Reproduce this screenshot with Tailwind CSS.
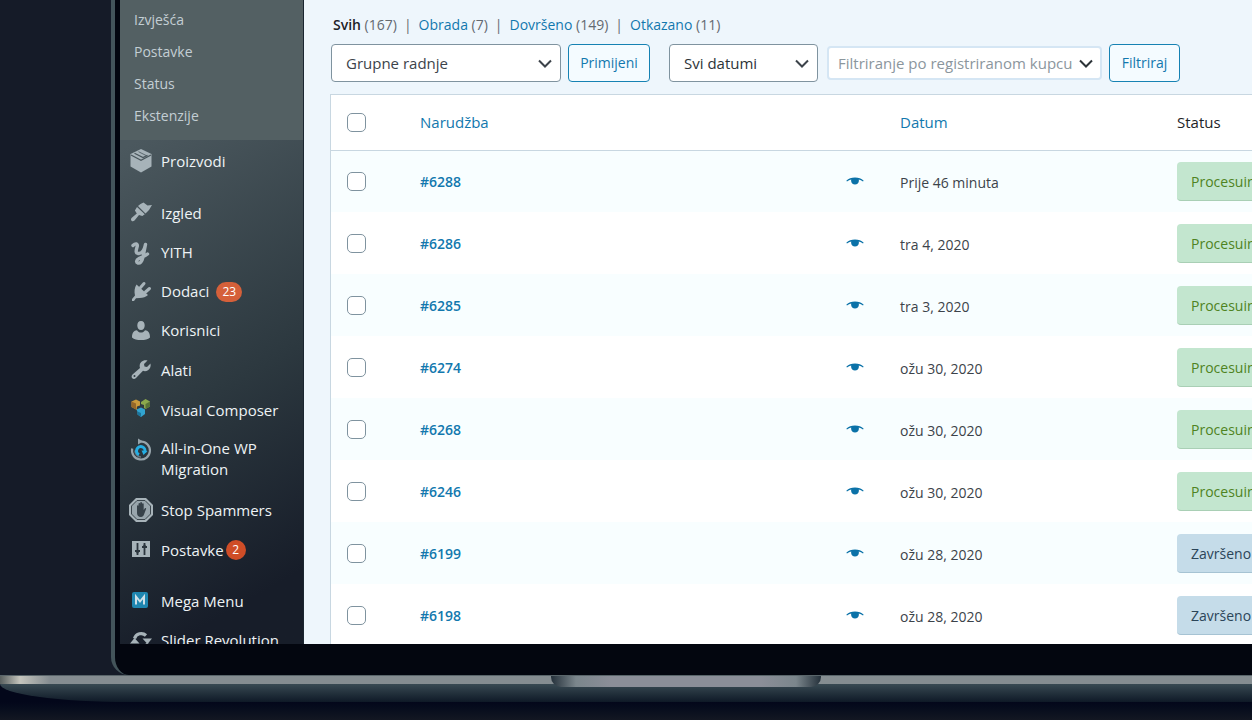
<!DOCTYPE html>
<html lang="hr">
<head>
    <meta charset="UTF-8">
    <meta name="viewport" content="width=device-width, initial-scale=1">
    <title>Narudžbe</title>
    <script src="https://cdn.jsdelivr.net/npm/@tailwindcss/browser@4"></script>
</head>
<body class="flex flex-col h-screen overflow-hidden bg-[#151b28] font-['Open_Sans','Noto_Sans',sans-serif] text-[15px] text-[#3c434a]">
    <svg class="hidden">
        <symbol id="eye" viewBox="0 0 18 10"><path fill="currentColor" d="M.3 4.800C2.500 2.600 5.500 1.500 9 1.500s6.500 1.100 8.700 3.300l-.7.700c-1.300-.9-2.700-1.600-4.300-2 .1.400.2.800.2 1.200C12.900 7 11.200 8.500 9 8.500S5.100 7 5.100 4.700c0-.4.100-.8.2-1.200-1.600.4-3 1.100-4.300 2z"/></symbol>
        <symbol id="chevron" viewBox="0 0 14 9"><path fill="none" stroke="currentColor" stroke-width="2" d="M1 1.500l6 6 6-6"/></symbol>
    </svg>

    <!-- Laptop lid -->
    <div class="flex flex-col flex-1 min-h-0 ml-[111px] pb-[31px] bg-[#03060f] border-l-4 border-[#43545a] rounded-bl-[18px]">
        <div class="flex flex-1 min-h-0 ml-[5px] overflow-hidden">
            <!-- Admin menu -->
            <nav class="w-[184px] shrink-0 overflow-hidden text-[#eef3f5] bg-linear-150 from-[#4b585e] from-20% via-[#2c383f] via-60% to-[#171d29] to-90% border-r border-[#1b2630]">
                <ul class="h-[140px] pt-1 pl-[14px] bg-[#536063] text-sm text-[#c3ced4]">
                    <li class="h-8 leading-8"><a href="#">Izvješća</a></li>
                    <li class="h-8 leading-8"><a href="#">Postavke</a></li>
                    <li class="h-8 leading-8"><a href="#">Status</a></li>
                    <li class="h-8 leading-8"><a href="#">Ekstenzije</a></li>
                </ul>
                <ul class="flex flex-col pt-px pl-2 text-[#a7b3b9]">
                    <li class="h-10 mb-3"><a href="#" class="flex items-center h-full gap-[7px]">
                        <svg class="w-[26px] h-[26px]" viewBox="0 0 26 26"><path fill="currentColor" d="M13 1l10.500 5v12.500L13 24.500 2.500 18.500V6z"/><path fill="none" stroke="#49565c" stroke-width="1.200" d="M3 7l10 5.300L23 7M6.500 5.300L15 9.500l4.500-2.300"/><path fill="none" stroke="#49565c" stroke-width=".8" d="M10.500 3.700l8 4"/></svg>
                        <span class="text-[#eef3f5]">Proizvodi</span></a></li>
                    <li class="h-10"><a href="#" class="flex items-center h-full gap-[7px]">
                        <svg class="w-[26px] h-[26px]" viewBox="0 0 26 26"><path fill="currentColor" d="M12.500 4l3-1.500 4 3L24 5l-3 5-3.500 3.500-7.500-7.500zM9 7l7.800 7.300-2.500 1.700-3.300-1-4.500 5.500c-1 1-2.300 1-3 .2s-.7-2 .3-2.900l5-4.300-1.900-3z"/></svg>
                        <span class="text-[#eef3f5]">Izgled</span></a></li>
                    <li class="h-[39px]"><a href="#" class="flex items-center h-full gap-[7px]">
                        <svg class="w-[26px] h-[26px]" viewBox="0 0 26 26"><path fill="none" stroke="currentColor" stroke-linecap="round" stroke-linejoin="round" stroke-width="3.400" d="M5 5.500c2.500-2.500 5-2 4.200 1C8.200 10 7 13.500 10.500 13.500c3.500 0 6-4.500 7-9L15 17c-1.200 5-3 6.500-5 6s-2-3 1-4.500 6-2.500 8.500-4.500"/></svg>
                        <span class="text-[#eef3f5]">YITH</span></a></li>
                    <li class="h-[39px]"><a href="#" class="flex items-center h-full gap-[7px]">
                        <svg class="w-[26px] h-[26px]" viewBox="0 0 26 26"><path fill="currentColor" d="M8.500 5.500l11.500 10.500c-2 1.800-5 3-8.500 3l-3.500.2L6 22H4v-2l3-3.500C6 12.500 6.500 8.500 8.500 5.500z"/><path stroke="currentColor" stroke-linecap="round" stroke-width="3" d="M12.500 8.500l3.500-4M17.500 13l4-3.500"/></svg>
                        <span class="text-[#eef3f5]">Dodaci</span>
                        <span class="px-[6px] rounded-full bg-[#d5603a] text-xs leading-5 text-white">23</span></a></li>
                    <li class="h-[39px]"><a href="#" class="flex items-center h-full gap-[7px]">
                        <svg class="w-[26px] h-[26px]" viewBox="0 0 26 26"><path fill="currentColor" d="M13 3c2.600 0 3.700 2 3.700 4.500S15.300 12 13 12 9.300 10 9.300 7.500 10.400 3 13 3zM9 12.200c1 1.500 2.300 2.300 4 2.300s3-.8 4-2.300c3.300.3 5 2.500 5 7.300-2 2-5 2.500-9 2.500s-7-.5-9-2.500c0-4.800 1.700-7 5-7.300z"/></svg>
                        <span class="text-[#eef3f5]">Korisnici</span></a></li>
                    <li class="h-10"><a href="#" class="flex items-center h-full gap-[7px]">
                        <svg class="w-[26px] h-[26px]" viewBox="0 0 26 26"><path fill="currentColor" fill-rule="evenodd" d="M19.500 3.500L16 7l.5 2.500 2.500.5L22.500 6.500c.6 3-.5 5.500-2.500 6.800-1.700 1-3.500 1-5 .5L8 21c-1.300 1.300-3 1-3.700.2-.9-.9-1-2.500.2-3.700l7.500-6.500c-.8-2-.3-4.300 1.200-5.900C15 3.400 17 3 19.500 3.500zM6.500 18a1 1 0 100 2 1 1 0 000-2z"/></svg>
                        <span class="text-[#eef3f5]">Alati</span></a></li>
                    <li class="h-10"><a href="#" class="flex items-center h-full gap-[7px]">
                        <svg class="w-[26px] h-[26px]" viewBox="0 0 26 26"><path fill="#c99a3c" d="M3.500 4.500L8 2.500l4 2v4l-3 1v3.500l-5.500-3z"/><path fill="#94672a" d="M3.500 4.500l4.500 2v3l1 3.500-5.500-3z"/><path fill="#8ba94c" d="M13 5l4.500-3L22 4.500v5L17.500 12l-1.500-1V8l-3-1z"/><path fill="#587337" d="M17.500 7L22 4.500v5L17.500 12z"/><path fill="#31a3cf" d="M8.500 12.500l4.500-2 4 2V17l-4 3-3.500-2.500V15z"/><path fill="#1c749c" d="M9.500 14.500L13 16v4l-3.500-2.500z"/></svg>
                        <span class="text-[#eef3f5]">Visual Composer</span></a></li>
                    <li class="h-[60px]"><a href="#" class="flex items-start h-full gap-[7px] pt-2">
                        <svg class="w-[26px] h-[26px] shrink-0" viewBox="0 0 26 26"><path fill="none" stroke="#96a3aa" stroke-width="2.200" d="M13 3.500a9 9 0 11-8.800 7"/><path fill="none" stroke="#67757d" stroke-width="1.600" d="M7 12.500a6.300 6.300 0 006 6.500"/><path fill="#96a3aa" d="M10 .5l5 3-5 3z"/><path fill="none" stroke="#25aee3" stroke-width="3" d="M11 16.600a4.200 4.200 0 115.700-2.300"/><path fill="#25aee3" d="M13.500 12.500l6 .5-4 4z"/></svg>
                        <span class="leading-[21px] text-[#eef3f5]">All-in-One WP Migration</span></a></li>
                    <li class="h-10"><a href="#" class="flex items-center h-full gap-[7px]">
                        <svg class="w-[26px] h-[26px]" viewBox="0 0 26 26"><path fill="#a7b3b9" d="M8 1h10l7 7v10l-7 7H8l-7-7V8z"/><path fill="#98a5ac" stroke="#3c474e" d="M9 3.500h8L22.500 9v8L17 22.500H9L3.500 17V9z"/><path fill="#37424a" d="M9 9c0-1 1.500-1 1.500 0V7c0-1.200 1.700-1.200 1.700 0v-1c0-1.200 1.800-1.200 1.800 0v1c0-1.200 1.700-1 1.700 0v6l1-1.500c.8-1 1.800-.3 1.300.8L16 17.500c-.5 1.500-1.500 2.500-3 2.500-3 0-4-2-4-4z"/></svg>
                        <span class="text-[#eef3f5]">Stop Spammers</span></a></li>
                    <li class="h-10 mb-3"><a href="#" class="flex items-center h-full gap-[7px]">
                        <svg class="w-[26px] h-[26px]" viewBox="0 0 26 26"><path fill="currentColor" d="M4 4h18v16H4z"/><path fill="none" stroke="#2c363e" stroke-width="1.800" d="M9.500 6v12M7 14h5M16.500 6v12M14 10h5"/><path fill="#2c363e" d="M7.500 14h4l-2 3.500zM14.500 10h4l-2-3.500z"/></svg>
                        <span class="-mr-[5px] text-[#eef3f5]">Postavke</span>
                        <span class="w-5 rounded-full bg-[#cf4d27] text-center text-xs leading-5 text-white">2</span></a></li>
                    <li class="h-[39px]"><a href="#" class="flex items-center h-full gap-[7px]">
                        <svg class="w-[26px] h-[26px]" viewBox="0 0 26 26"><rect x="4" y="3" width="16" height="16" rx="2" fill="#1f86b0"/><path fill="none" stroke="#cfe0e8" stroke-width="2" d="M8 15.500V7.500l4 5 4-5v8"/></svg>
                        <span class="text-[#eef3f5]">Mega Menu</span></a></li>
                    <li class="h-[39px]"><a href="#" class="flex items-center h-full gap-[7px]">
                        <svg class="w-[26px] h-[26px]" viewBox="0 0 26 26"><path fill="none" stroke="currentColor" stroke-width="3.200" d="M6.500 10.500a7 7 0 0111.500-3M19.500 15.500a7 7 0 01-11.500 3"/><path fill="currentColor" d="M14.500 10.500H24L19.500 16zM2 15.500h9.500L6.500 10z"/></svg>
                        <span class="whitespace-nowrap text-[#eef3f5]">Slider Revolution</span></a></li>
                </ul>
            </nav>

            <!-- Orders list -->
            <main class="flex-1 min-w-0 pl-[26px] bg-[#eef6fc]">
                <div class="flex gap-[7px] pt-[14px] pl-[3px] leading-[22px] text-[14px] text-[#646970] whitespace-nowrap">
                    <span><a href="#" class="font-semibold text-[#1d2327]">Svih</a> (167)</span> <span>|</span>
                    <span><a href="#" class="text-[#1278ae]">Obrada</a> (7)</span> <span>|</span>
                    <span><a href="#" class="text-[#1278ae]">Dovršeno</a> (149)</span> <span>|</span>
                    <span><a href="#" class="text-[#1278ae]">Otkazano</a> (11)</span>
                </div>
                <form class="flex items-center mt-2 mb-3 pl-px">
                    <div class="relative w-[230px]">
                        <select aria-label="Grupne radnje" class="appearance-none w-full h-[38px] pl-[14px] pr-8 bg-white border border-[#7f939f] rounded-[4px]"><option>Grupne radnje</option></select>
                        <svg class="absolute right-[9px] top-[15px] w-[14px] h-[9px] pointer-events-none"><use href="#chevron"/></svg>
                    </div>
                    <button type="button" class="w-[82px] h-[38px] ml-[7px] bg-[#f4fbff] border border-[#1682b3] rounded-[4px] text-sm text-[#1278ae]">Primijeni</button>
                    <div class="relative w-[149px] ml-[19px]">
                        <select aria-label="Svi datumi" class="appearance-none w-full h-[38px] pl-[14px] pr-8 bg-white border border-[#7f939f] rounded-[4px] text-[#2c3338]"><option>Svi datumi</option></select>
                        <svg class="absolute right-[9px] top-[15px] w-[14px] h-[9px] pointer-events-none"><use href="#chevron"/></svg>
                    </div>
                    <div class="relative w-[275px] ml-[9px]">
                        <select aria-label="Filtriranje po registriranom kupcu" class="appearance-none w-full h-[34px] pl-[9px] pr-6 bg-white border-2 border-[#d5e6f4] rounded-[4px] text-[#8b969d]"><option>Filtriranje po registriranom kupcu</option></select>
                        <svg class="absolute right-[9px] top-[13px] w-[14px] h-[9px] pointer-events-none text-[#2c3338]"><use href="#chevron"/></svg>
                    </div>
                    <button type="button" class="w-[71px] h-[38px] ml-[7px] bg-[#f4fbff] border border-[#1682b3] rounded-[4px] text-sm text-[#1278ae]">Filtriraj</button>
                </form>
                <div class="overflow-hidden border-t border-l border-[#c8d7e1] bg-white">
                    <table class="w-full table-fixed text-left whitespace-nowrap">
                        <colgroup>
                            <col class="w-[89px]"><col><col class="w-[68px]"><col class="w-[277px]"><col class="w-[75px]">
                        </colgroup>
                        <thead>
                            <tr class="h-[55px] border-b border-[#c8d7e1]">
                                <th class="pl-4"><input type="checkbox" aria-label="Odaberi sve" class="block appearance-none size-[19px] border border-[#7f939f] rounded-[5px] bg-white"></th>
                                <th class="font-normal"><a href="#" class="text-[#1278ae]">Narudžba</a></th>
                                <th></th>
                                <th class="font-normal"><a href="#" class="text-[#1278ae]">Datum</a></th>
                                <th class="font-normal text-[#1d2327]">Status</th>
                            </tr>
                        </thead>
                        <tbody>
                            <tr class="h-[62px] bg-[#f8feff]">
                                <td class="pl-4"><input type="checkbox" aria-label="#6288" class="block appearance-none size-[19px] border border-[#7f939f] rounded-[5px] bg-white"></td>
                                <td><a href="#" class="text-sm font-semibold text-[#1278ae]">#6288</a></td>
                                <td class="pl-[14px]"><svg class="w-[18px] h-[10px] text-[#0b72a8]"><use href="#eye"/></svg></td>
                                <td class="pt-[3px] text-sm">Prije 46 minuta</td>
                                <td><mark class="block w-28 h-[39px] pl-[14px] rounded-[4px] border-b border-[#a9cfb5] bg-[#c3e6cf] text-sm leading-[39px] text-[#4f8322]">Procesuiranje</mark></td>
                            </tr>
                            <tr class="h-[62px]">
                                <td class="pl-4"><input type="checkbox" aria-label="#6286" class="block appearance-none size-[19px] border border-[#7f939f] rounded-[5px] bg-white"></td>
                                <td><a href="#" class="text-sm font-semibold text-[#1278ae]">#6286</a></td>
                                <td class="pl-[14px]"><svg class="w-[18px] h-[10px] text-[#0b72a8]"><use href="#eye"/></svg></td>
                                <td class="pt-[3px] text-sm">tra 4, 2020</td>
                                <td><mark class="block w-28 h-[39px] pl-[14px] rounded-[4px] border-b border-[#a9cfb5] bg-[#c3e6cf] text-sm leading-[39px] text-[#4f8322]">Procesuiranje</mark></td>
                            </tr>
                            <tr class="h-[62px] bg-[#f8feff]">
                                <td class="pl-4"><input type="checkbox" aria-label="#6285" class="block appearance-none size-[19px] border border-[#7f939f] rounded-[5px] bg-white"></td>
                                <td><a href="#" class="text-sm font-semibold text-[#1278ae]">#6285</a></td>
                                <td class="pl-[14px]"><svg class="w-[18px] h-[10px] text-[#0b72a8]"><use href="#eye"/></svg></td>
                                <td class="pt-[3px] text-sm">tra 3, 2020</td>
                                <td><mark class="block w-28 h-[39px] pl-[14px] rounded-[4px] border-b border-[#a9cfb5] bg-[#c3e6cf] text-sm leading-[39px] text-[#4f8322]">Procesuiranje</mark></td>
                            </tr>
                            <tr class="h-[62px]">
                                <td class="pl-4"><input type="checkbox" aria-label="#6274" class="block appearance-none size-[19px] border border-[#7f939f] rounded-[5px] bg-white"></td>
                                <td><a href="#" class="text-sm font-semibold text-[#1278ae]">#6274</a></td>
                                <td class="pl-[14px]"><svg class="w-[18px] h-[10px] text-[#0b72a8]"><use href="#eye"/></svg></td>
                                <td class="pt-[3px] text-sm">ožu 30, 2020</td>
                                <td><mark class="block w-28 h-[39px] pl-[14px] rounded-[4px] border-b border-[#a9cfb5] bg-[#c3e6cf] text-sm leading-[39px] text-[#4f8322]">Procesuiranje</mark></td>
                            </tr>
                            <tr class="h-[62px] bg-[#f8feff]">
                                <td class="pl-4"><input type="checkbox" aria-label="#6268" class="block appearance-none size-[19px] border border-[#7f939f] rounded-[5px] bg-white"></td>
                                <td><a href="#" class="text-sm font-semibold text-[#1278ae]">#6268</a></td>
                                <td class="pl-[14px]"><svg class="w-[18px] h-[10px] text-[#0b72a8]"><use href="#eye"/></svg></td>
                                <td class="pt-[3px] text-sm">ožu 30, 2020</td>
                                <td><mark class="block w-28 h-[39px] pl-[14px] rounded-[4px] border-b border-[#a9cfb5] bg-[#c3e6cf] text-sm leading-[39px] text-[#4f8322]">Procesuiranje</mark></td>
                            </tr>
                            <tr class="h-[62px]">
                                <td class="pl-4"><input type="checkbox" aria-label="#6246" class="block appearance-none size-[19px] border border-[#7f939f] rounded-[5px] bg-white"></td>
                                <td><a href="#" class="text-sm font-semibold text-[#1278ae]">#6246</a></td>
                                <td class="pl-[14px]"><svg class="w-[18px] h-[10px] text-[#0b72a8]"><use href="#eye"/></svg></td>
                                <td class="pt-[3px] text-sm">ožu 30, 2020</td>
                                <td><mark class="block w-28 h-[39px] pl-[14px] rounded-[4px] border-b border-[#a9cfb5] bg-[#c3e6cf] text-sm leading-[39px] text-[#4f8322]">Procesuiranje</mark></td>
                            </tr>
                            <tr class="h-[62px] bg-[#f8feff]">
                                <td class="pl-4"><input type="checkbox" aria-label="#6199" class="block appearance-none size-[19px] border border-[#7f939f] rounded-[5px] bg-white"></td>
                                <td><a href="#" class="text-sm font-semibold text-[#1278ae]">#6199</a></td>
                                <td class="pl-[14px]"><svg class="w-[18px] h-[10px] text-[#0b72a8]"><use href="#eye"/></svg></td>
                                <td class="pt-[3px] text-sm">ožu 28, 2020</td>
                                <td><mark class="block w-28 h-[39px] pl-[14px] rounded-[4px] border-b border-[#a6c3d3] bg-[#c5dce9] text-sm leading-[39px] text-[#2b4558]">Završeno</mark></td>
                            </tr>
                            <tr class="h-[62px]">
                                <td class="pl-4"><input type="checkbox" aria-label="#6198" class="block appearance-none size-[19px] border border-[#7f939f] rounded-[5px] bg-white"></td>
                                <td><a href="#" class="text-sm font-semibold text-[#1278ae]">#6198</a></td>
                                <td class="pl-[14px]"><svg class="w-[18px] h-[10px] text-[#0b72a8]"><use href="#eye"/></svg></td>
                                <td class="pt-[3px] text-sm">ožu 28, 2020</td>
                                <td><mark class="block w-28 h-[39px] pl-[14px] rounded-[4px] border-b border-[#a6c3d3] bg-[#c5dce9] text-sm leading-[39px] text-[#2b4558]">Završeno</mark></td>
                            </tr>
                        </tbody>
                    </table>
                </div>
            </main>
        </div>
    </div>

    <!-- Laptop base with the opening notch -->
    <div class="relative h-[45px] shrink-0 bg-linear-to-b from-[#03071a] from-60% to-[#131722]">
        <div class="h-[9px] border-t border-[#59656a] bg-linear-to-r from-[#59605f] via-[#c5c5bd] via-[20px] to-[#858d91] to-[50px]"></div>
        <div class="h-[18px] rounded-bl-[130px_18px] bg-linear-to-b from-[#394a53] to-[#0f1a27]"></div>
        <div class="absolute top-0 left-[44%] w-[270px] h-3 rounded-b-[10px] border-t border-[#59656a] bg-[linear-gradient(90deg,#25313b,#7b868c_25px,#8b8e98_60px,#8b8e98_210px,#7b868c_245px,#25313b)]"></div>
    </div>
</body>
</html>
